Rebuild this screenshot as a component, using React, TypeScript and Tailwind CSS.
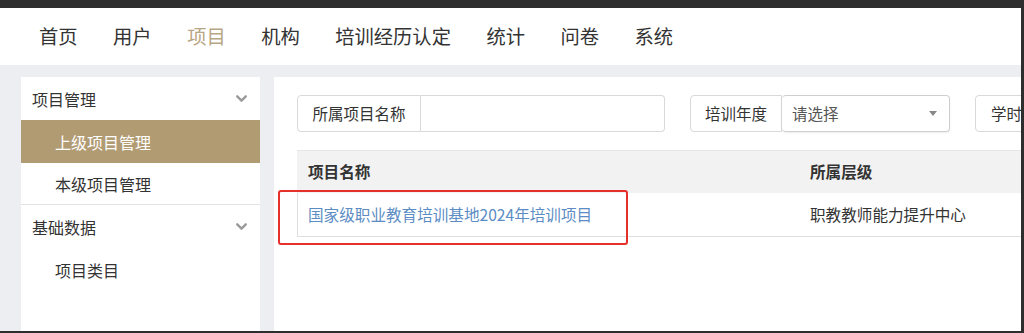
import { ChevronDown } from 'lucide-react';

const navItems = ['首页', '用户', '项目', '机构', '培训经历认定', '统计', '问卷', '系统'];

const font = { fontFamily: '"Noto Sans CJK SC", "Liberation Sans", sans-serif' };

function SideGroup({ title }: { title: string }) {
  return (
    <div className="h-[43px] flex items-center justify-between pl-[11px] pr-[10px] text-[16px] text-[#333]">
      <span>{title}</span>
      <ChevronDown size={17} strokeWidth={3.4} className="text-[#9a9a9a]" />
    </div>
  );
}

function SideItem({ label, active, h = 'h-[43px]' }: { label: string; active?: boolean; h?: string }) {
  return (
    <div
      className={`${h} flex items-center pl-[34px] text-[16px] ${
        active ? 'bg-[#b19b73] text-white' : 'text-[#333]'
      }`}
    >
      {label}
    </div>
  );
}

export default function App() {
  return (
    <div
      className="w-[1024px] h-[333px] flex flex-col overflow-hidden border-r-[3px] border-b-2 border-[#2e2e2e] bg-[#eceef1]"
      style={font}
    >
      <div className="h-[8px] shrink-0 bg-[#2e2e2e]" />
      <header className="h-[57px] shrink-0 bg-white flex items-center pl-[39px] gap-[35.5px] text-[19.3px] text-[#333]">
        {navItems.map((item) => (
          <span key={item} className={item === '项目' ? 'text-[#b8a684]' : ''}>
            {item}
          </span>
        ))}
      </header>
      <div className="flex-1 flex gap-[14px] pl-[21px] pt-[12px] min-h-0">
        <aside className="w-[239px] shrink-0 bg-white">
          <SideGroup title="项目管理" />
          <SideItem label="上级项目管理" active />
          <SideItem label="本级项目管理" h="h-[41px]" />
          <div className="border-t border-[#e3e3e3]" />
          <SideGroup title="基础数据" />
          <SideItem label="项目类目" />
        </aside>
        <main className="relative flex-1 bg-white pl-[23px] pt-[18px] overflow-hidden">
          <div className="flex items-center gap-[25px] h-[37px] text-[15.5px] text-[#333]">
            <div className="flex h-full">
              <div className="w-[124px] flex items-center justify-center border border-[#d9d9d9] rounded-l-[4px]">
                所属项目名称
              </div>
              <div className="w-[244px] border border-l-0 border-[#d9d9d9] rounded-r-[4px]" />
            </div>
            <div className="flex h-full">
              <div className="w-[92px] flex items-center justify-center border border-[#d9d9d9] rounded-l-[4px]">
                培训年度
              </div>
              <div className="w-[168px] flex items-center justify-between pl-[10px] pr-[12px] border border-l-0 border-[#cfcfcf] rounded-[4px] shadow-[0_1px_2px_rgba(0,0,0,0.08)]">
                <span className="text-[#555]">请选择</span>
                <span className="w-0 h-0 border-l-[4px] border-r-[4px] border-t-[5px] border-l-transparent border-r-transparent border-t-[#888]" />
              </div>
            </div>
            <div className="flex h-full shrink-0">
              <div className="w-[92px] flex items-center pl-[15px] border border-[#d9d9d9] rounded-l-[4px] whitespace-nowrap">
                学时认定
              </div>
            </div>
          </div>
          <div className="mt-[18px] w-[760px] text-[15.6px] text-[#333]">
            <div className="h-[43px] flex items-center bg-[#f2f2f2] border-t border-[#e6e6e6] font-bold">
              <div className="w-[513px] pl-[11px]">项目名称</div>
              <div>所属层级</div>
            </div>
            <div className="h-[44px] flex items-center border-b border-l border-[#dedede]">
              <div className="w-[512px] pl-[10px] text-[#5b8dc4]">国家级职业教育培训基地2024年培训项目</div>
              <div>职教教师能力提升中心</div>
            </div>
          </div>
          <div className="absolute left-[4px] top-[113px] w-[350px] h-[55px] border-2 border-[#e5302b] rounded-[3px]" />
        </main>
      </div>
    </div>
  );
}
